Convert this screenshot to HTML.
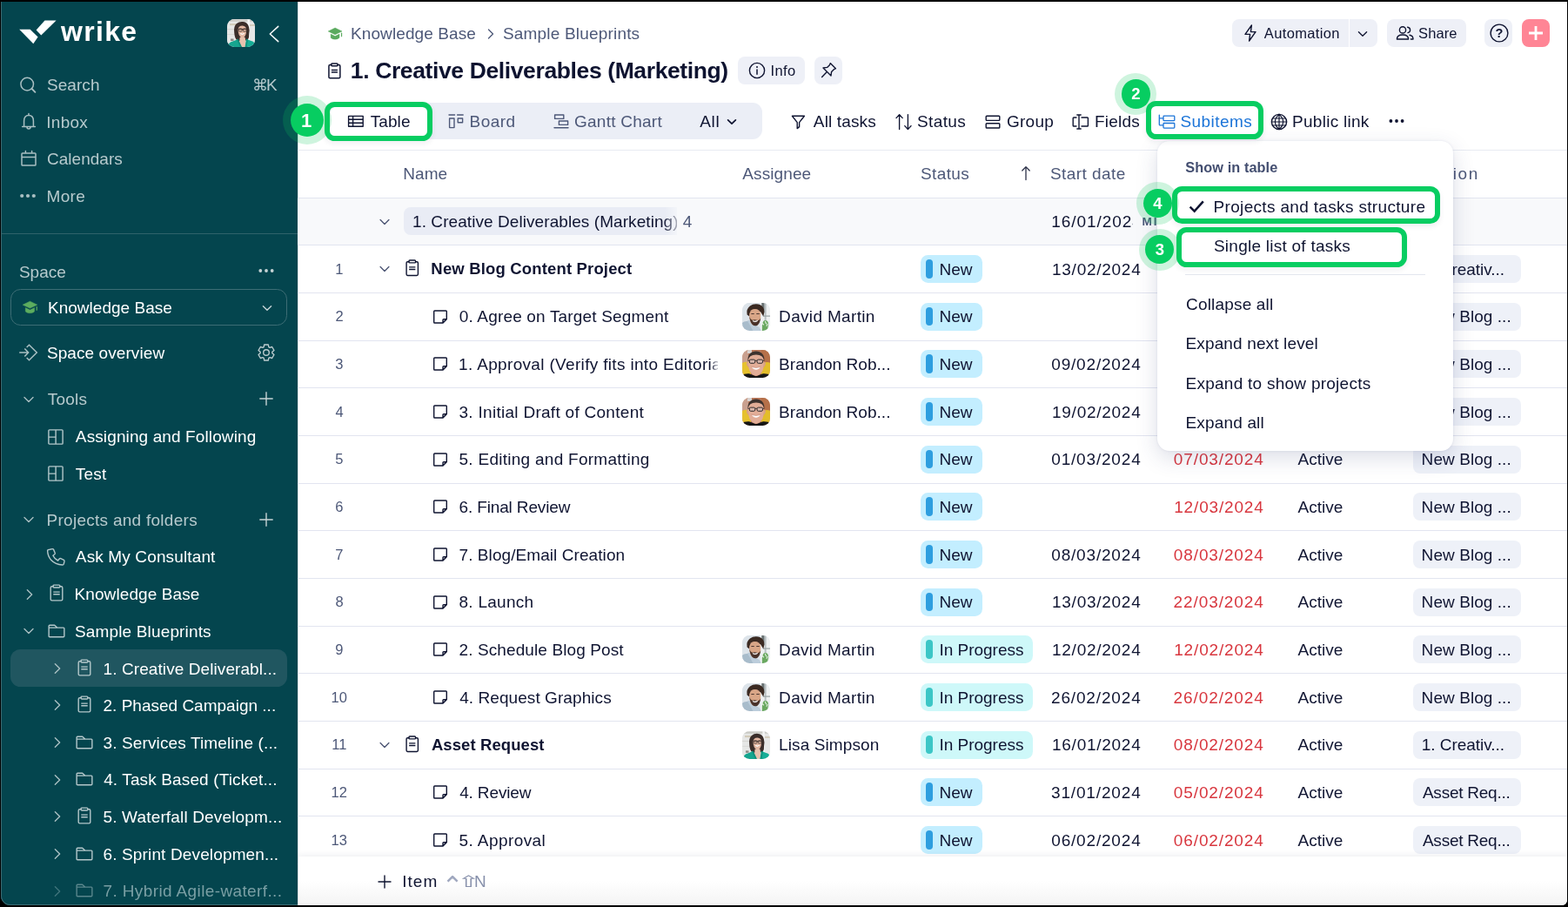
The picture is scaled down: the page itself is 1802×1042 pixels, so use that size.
<!DOCTYPE html>
<html lang="en"><head><meta charset="utf-8"><title>Wrike - 1. Creative Deliverables (Marketing)</title>
<style>
html,body{margin:0;padding:0;}
body{width:1802px;height:1042px;overflow:hidden;background:#000;font-family:"Liberation Sans", sans-serif;position:relative;}
#app{position:absolute;left:0;top:0;width:1802px;height:1042px;overflow:hidden;will-change:transform;}
#app>div,#app>svg{position:absolute;display:block;}
.t{white-space:pre;}
svg{overflow:visible;}
</style></head><body><div id="app">
<div style="left:0px;top:0px;width:1802px;height:1042px;background:#000;"></div>
<div style="left:342px;top:2px;width:1459px;height:1038px;background:#fff;border-radius:0 0 6px 0;"></div>
<div style="left:1px;top:2px;width:341px;height:1038px;background:#04454e;border-radius:0 0 0 11px;box-shadow:inset 1px 0 0 #3c6a72, inset 0 -1px 0 #3c6a72;"></div>
<div style="left:342px;top:2px;width:1px;height:1038px;background:#d9dfe0;"></div>
<svg style="left:20px;top:20px;" width="50" height="34" viewBox="0 0 50 34" fill="none"><path d="M2.2 13.8 H14.6 L23.6 22.6 L18.3 30.2 Z" fill="#fff"/><path d="M31.5 3.4 H44.6 L27.3 20.6 L21.6 14.6 Z" fill="#fff"/></svg>
<div class="t" style="left:70.00px;top:15.37px;font-size:32px;line-height:42px;color:#fff;font-weight:700;letter-spacing:1.322px;">wrike</div>
<div style="left:261px;top:22.2px;width:32px;height:32px;border-radius:8.5px;overflow:hidden;"><svg style="display:block;overflow:hidden" width="32" height="32" viewBox="0 0 32 32"><defs><filter id="avb1" x="-10%" y="-10%" width="120%" height="120%"><feGaussianBlur stdDeviation="0.55"/></filter></defs><rect width="32" height="32" fill="#e5e6e4"/><g filter="url(#avb1)"><rect x="-2" y="-2" width="36" height="36" fill="#e6e7e6"/><rect x="-2" y="0.5" width="36" height="2.2" fill="#c9c9c4"/><rect x="3" y="5" width="9" height="2.2" fill="#d2cbb9"/><rect x="23" y="6" width="10" height="2" fill="#d4cdbd"/><rect x="23.5" y="0" width="2.5" height="32" fill="#f4f5f5"/><rect x="0" y="11" width="8" height="1.2" fill="#d6d6d2"/><rect x="0" y="17" width="8" height="1" fill="#d9d9d6"/><rect x="4" y="22.5" width="3.5" height="2.5" fill="#8d8a86"/><path d="M8.2 15 Q7.4 8 11 5 Q14 2.4 18.5 3 Q23.5 3.6 25 9 Q26.2 13 25.2 17 Q25.6 21 23.6 24 L20 25 L12 25 Q8.4 22 8.2 15 Z" fill="#3b2d2a"/><path d="M12.6 12.6 Q12.8 7.6 17.6 7.6 Q22.2 7.8 22.2 13 Q22.2 18 20 20.6 Q18 22.4 16 21.2 Q12.8 18.6 12.6 12.6 Z" fill="#e2b7a2"/><path d="M14.6 21 L20.6 21 L21.4 26 L22 32 L13.4 32 L14.2 25.6 Z" fill="#e6c1ae"/><path d="M13 11 H22.4 V11.9 H13 Z" fill="#3a2f2c"/><rect x="13.2" y="11" width="3.9" height="3" rx="0.8" fill="none" stroke="#40342f" stroke-width="0.8"/><rect x="18.3" y="11" width="3.9" height="3" rx="0.8" fill="none" stroke="#40342f" stroke-width="0.8"/><path d="M15.2 16.6 Q17.4 18.6 20 16.4 Q17.6 17.4 15.2 16.6 Z" fill="#fff" stroke="#fff" stroke-width="0.7"/><path d="M0.5 33 Q1.5 26.6 6.5 25.6 L12.2 23.2 L16.4 31.5 L17 33 Z" fill="#14a58f"/><path d="M33 33 L31.5 27.6 Q30.5 25.6 27 24.8 L22 22.8 L20.6 31.5 L20 33 Z" fill="#16ad96"/><path d="M11 23.4 L12.6 22.6 L17 32 L15 32 Z" fill="#0f8f7c"/><path d="M22.6 22.6 L21 32 L22.6 32 L24 23.4 Z" fill="#0f8f7c"/></g></svg></div>
<svg style="left:302.5px;top:26.5px;" width="24" height="24" viewBox="0 0 24 24" fill="none"><path d="M16.7 3.4000000000000004 L7.3 12 L16.7 20.6" stroke="#f4f7f7" stroke-width="1.6" fill="none" stroke-linecap="round" stroke-linejoin="round" /></svg>
<svg style="left:20px;top:85px;" width="24" height="24" viewBox="0 0 24 24" fill="none"><circle cx="11.2" cy="11.6" r="7.3" stroke="#a9bfc2" stroke-width="1.5"/><path d="M16.6 17 L20.4 20.8" stroke="#a9bfc2" stroke-width="1.9" fill="none" stroke-linecap="round" stroke-linejoin="round" /></svg>
<div class="t" style="left:53.93px;top:84.82px;font-size:19px;line-height:25px;color:#b7cacd;letter-spacing:0.073px;">Search</div>
<div class="t" style="left:290px;top:86px;font-family:'DejaVu Sans','Liberation Sans',sans-serif;font-size:18px;line-height:24px;color:#b7cacd;">⌘</div>
<div class="t" style="left:306.10px;top:84.82px;font-size:19px;line-height:25px;color:#b7cacd;">K</div>
<svg style="left:21px;top:127px;" width="24" height="24" viewBox="0 0 24 24" fill="none"><path d="M4.6 18.6 H19.4 M6.6 18.4 V12 Q6.6 5.6 12 5.6 Q17.4 5.6 17.4 12 V18.4 M12 5.4 V3.6 M10 19 Q10 21 12 21 Q14 21 14 19" stroke="#a9bfc2" stroke-width="1.5" fill="none" stroke-linecap="round" stroke-linejoin="round" /></svg>
<div class="t" style="left:53.28px;top:127.52px;font-size:19px;line-height:25px;color:#b7cacd;letter-spacing:0.279px;">Inbox</div>
<svg style="left:21px;top:170px;" width="24" height="24" viewBox="0 0 24 24" fill="none"><path d="M4.8 6 H19.2 Q20 6 20 6.8 V19.2 Q20 20 19.2 20 H4.8 Q4 20 4 19.2 V6.8 Q4 6 4.8 6 Z M4 10.6 H20 M8.4 3.6 V6 M15.6 3.6 V6" stroke="#a9bfc2" stroke-width="1.5" fill="none" stroke-linecap="round" stroke-linejoin="round" /></svg>
<div class="t" style="left:54.00px;top:170.12px;font-size:19px;line-height:25px;color:#b7cacd;letter-spacing:0.021px;">Calendars</div>
<svg style="left:20.299999999999997px;top:218.6px;" width="24" height="12" viewBox="0 0 24 12" fill="none"><circle cx="5.2" cy="6" r="2.1" fill="#a9bfc2"/><circle cx="12.0" cy="6" r="2.1" fill="#a9bfc2"/><circle cx="18.8" cy="6" r="2.1" fill="#a9bfc2"/></svg>
<div class="t" style="left:53.50px;top:212.82px;font-size:19px;line-height:25px;color:#b7cacd;letter-spacing:0.349px;">More</div>
<div style="left:2px;top:268px;width:340px;height:1px;background:#2f636b;"></div>
<div class="t" style="left:21.93px;top:299.72px;font-size:19px;line-height:25px;color:#b7cacd;letter-spacing:0.017px;">Space</div>
<svg style="left:293.5px;top:305px;" width="24" height="12" viewBox="0 0 24 12" fill="none"><circle cx="5.3" cy="6" r="1.9" fill="#c6d3d5"/><circle cx="12.0" cy="6" r="1.9" fill="#c6d3d5"/><circle cx="18.7" cy="6" r="1.9" fill="#c6d3d5"/></svg>
<div style="left:12px;top:332px;width:318px;height:42px;border-radius:11.5px;border:1px solid #3d6d75;box-sizing:border-box;background:#04454e;"></div>
<svg style="left:25.9px;top:346px;" width="16.9" height="14" viewBox="0 0 16.2 13.3" fill="none"><path d="M0.2 3.9 L8.1 0.1 L16 3.9 L8.1 7.7 Z" fill="#5cad5f" stroke="#5cad5f" stroke-width="0.5" stroke-linejoin="round"/><path d="M3.1 7.1 L8.1 9.6 L13.1 7.1 V10.9 Q13.1 11.5 12.5 11.9 Q10.6 13.2 8.1 13.2 Q5.6 13.2 3.7 11.9 Q3.1 11.5 3.1 10.9 Z" fill="#5cad5f" stroke="#5cad5f" stroke-width="0.3" stroke-linejoin="round"/><rect x="15" y="5.6" width="1.15" height="4.7" rx="0.55" fill="#5cad5f"/></svg>
<div class="t" style="left:55.00px;top:340.92px;font-size:19px;line-height:25px;color:#fff;letter-spacing:0.021px;">Knowledge Base</div>
<svg style="left:297px;top:343.5px;" width="20" height="20" viewBox="0 0 20 20" fill="none"><path d="M5.4 7.7 L10 12.3 L14.6 7.7" stroke="#c5d5d7" stroke-width="1.4" fill="none" stroke-linecap="round" stroke-linejoin="round" /></svg>
<svg style="left:20px;top:393px;" width="26" height="24" viewBox="0 0 26 24" fill="none"><path d="M2.2 12 H12.4 M8.3 7.6 L12.6 12 L8.3 16.4 M10.7 6 L13.5 3.2 L22.3 12 L13.5 20.8 L10.7 18" stroke="#a9bfc2" stroke-width="1.5" fill="none" stroke-linecap="butt" stroke-linejoin="miter" /></svg>
<div class="t" style="left:53.93px;top:392.92px;font-size:19px;line-height:25px;color:#fff;letter-spacing:0.082px;">Space overview</div>
<svg style="left:294.3px;top:393px;" width="24" height="24" viewBox="0 0 24 24" fill="none"><path d="M14.30 21.01 L9.70 21.01 L9.19 18.30 L7.95 17.59 L5.35 18.50 L3.05 14.51 L5.14 12.71 L5.14 11.29 L3.05 9.49 L5.35 5.50 L7.95 6.41 L9.19 5.70 L9.70 2.99 L14.30 2.99 L14.81 5.70 L16.05 6.41 L18.65 5.50 L20.95 9.49 L18.86 11.29 L18.86 12.71 L20.95 14.51 L18.65 18.50 L16.05 17.59 L14.81 18.30 Z" stroke="#bccbce" stroke-width="1.4" fill="none" stroke-linecap="round" stroke-linejoin="round" /><circle cx="12" cy="12" r="3.3" stroke="#bccbce" stroke-width="1.4"/></svg>
<svg style="left:23px;top:448.6px;" width="20" height="20" viewBox="0 0 20 20" fill="none"><path d="M5 7.5 L10 12.5 L15 7.5" stroke="#a9bfc2" stroke-width="1.4" fill="none" stroke-linecap="round" stroke-linejoin="round" /></svg>
<div class="t" style="left:54.65px;top:446.02px;font-size:19px;line-height:25px;color:#b7cacd;letter-spacing:0.274px;">Tools</div>
<svg style="left:295.5px;top:448px;" width="20" height="20" viewBox="0 0 20 20" fill="none"><path d="M2.8 10 H17.2 M10 2.8 V17.2" stroke="#c6d3d5" stroke-width="1.4" fill="none" stroke-linecap="round" stroke-linejoin="round" /></svg>
<svg style="left:52.3px;top:489.7px;" width="24" height="24" viewBox="0 0 24 24" fill="none"><path d="M4.8 3.9 H19.2 Q20.1 3.9 20.1 4.8 V19.2 Q20.1 20.1 19.2 20.1 H4.8 Q3.9 20.1 3.9 19.2 V4.8 Q3.9 3.9 4.8 3.9 Z M12.1 3.9 V20.1 M3.9 12.1 H12.1" stroke="#b4c7ca" stroke-width="1.4" fill="none" stroke-linecap="round" stroke-linejoin="round" /></svg>
<div class="t" style="left:86.85px;top:488.72px;font-size:19px;line-height:25px;color:#fff;letter-spacing:0.115px;">Assigning and Following</div>
<svg style="left:52.3px;top:532.4px;" width="24" height="24" viewBox="0 0 24 24" fill="none"><path d="M4.8 3.9 H19.2 Q20.1 3.9 20.1 4.8 V19.2 Q20.1 20.1 19.2 20.1 H4.8 Q3.9 20.1 3.9 19.2 V4.8 Q3.9 3.9 4.8 3.9 Z M12.1 3.9 V20.1 M3.9 12.1 H12.1" stroke="#b4c7ca" stroke-width="1.4" fill="none" stroke-linecap="round" stroke-linejoin="round" /></svg>
<div class="t" style="left:86.65px;top:531.72px;font-size:19px;line-height:25px;color:#fff;letter-spacing:0.249px;">Test</div>
<svg style="left:23px;top:587.2px;" width="20" height="20" viewBox="0 0 20 20" fill="none"><path d="M5 7.5 L10 12.5 L15 7.5" stroke="#a9bfc2" stroke-width="1.4" fill="none" stroke-linecap="round" stroke-linejoin="round" /></svg>
<div class="t" style="left:53.50px;top:584.72px;font-size:19px;line-height:25px;color:#b7cacd;letter-spacing:0.275px;">Projects and folders</div>
<svg style="left:295.5px;top:587px;" width="20" height="20" viewBox="0 0 20 20" fill="none"><path d="M2.8 10 H17.2 M10 2.8 V17.2" stroke="#c6d3d5" stroke-width="1.4" fill="none" stroke-linecap="round" stroke-linejoin="round" /></svg>
<svg style="left:52.4px;top:627.5px;" width="24" height="24" viewBox="0 0 24 24" fill="none"><path d="M5.2 3.2 L8.2 2.6 Q9.2 2.5 9.6 3.4 L11.2 7.2 Q11.5 8.1 10.8 8.7 L8.9 10.2 Q10.6 14 14.6 16 L16.2 14 Q16.9 13.3 17.8 13.7 L21.4 15.4 Q22.2 15.9 22 16.8 L21.3 19.8 Q21 21 19.8 21 Q11.6 20.6 6.6 15.2 Q2.8 11 2.6 4.6 Q2.6 3.5 5.2 3.2 Z" stroke="#b4c7ca" stroke-width="1.4" fill="none" stroke-linecap="round" stroke-linejoin="round" /></svg>
<div class="t" style="left:86.85px;top:627.32px;font-size:19px;line-height:25px;color:#fff;letter-spacing:0.134px;">Ask My Consultant</div>
<svg style="left:24px;top:672.5px;" width="20" height="20" viewBox="0 0 20 20" fill="none"><path d="M7.35 4.7 L12.65 10 L7.35 15.3" stroke="#a9bfc2" stroke-width="1.4" fill="none" stroke-linecap="round" stroke-linejoin="round" /></svg>
<svg style="left:52.5px;top:669.2px;" width="24.0" height="24.0" viewBox="0 0 24 24" fill="none"><path d="M8.1 4.8 H6.6 Q5.2 4.8 5.2 6.2 V19.5 Q5.2 20.9 6.6 20.9 H17.4 Q18.8 20.9 18.8 19.5 V6.2 Q18.8 4.8 17.4 4.8 H15.9" stroke="#b4c7ca" stroke-width="1.4" fill="none" stroke-linecap="round" stroke-linejoin="round" /><path d="M8.1 4.1 Q8.1 3.1 9.1 3.1 H14.9 Q15.9 3.1 15.9 4.1 V5 Q15.9 6 14.9 6 H9.1 Q8.1 6 8.1 5 Z" stroke="#b4c7ca" stroke-width="1.4" fill="none" stroke-linecap="round" stroke-linejoin="round" /><path d="M8.3 11.1 H15.7 M8.3 13.8 H15.7" stroke="#b4c7ca" stroke-width="1.4" fill="none" stroke-linecap="butt" stroke-linejoin="round" /></svg>
<div class="t" style="left:85.50px;top:670.12px;font-size:19px;line-height:25px;color:#fff;letter-spacing:0.098px;">Knowledge Base</div>
<svg style="left:23px;top:715.1px;" width="20" height="20" viewBox="0 0 20 20" fill="none"><path d="M5 7.5 L10 12.5 L15 7.5" stroke="#a9bfc2" stroke-width="1.4" fill="none" stroke-linecap="round" stroke-linejoin="round" /></svg>
<svg style="left:53.150000000000006px;top:712.6px;" width="24" height="24" viewBox="0 0 24 24" fill="none"><path d="M3.15 6.2 Q3.15 5.3 4.05 5.3 H9.7 L12.7 8.1 H19.95 Q20.85 8.1 20.85 9 V17.8 Q20.85 18.7 19.95 18.7 H4.05 Q3.15 18.7 3.15 17.8 Z M3.15 8.1 H12.7" stroke="#b4c7ca" stroke-width="1.4" fill="none" stroke-linecap="round" stroke-linejoin="round" /></svg>
<div class="t" style="left:85.93px;top:712.72px;font-size:19px;line-height:25px;color:#fff;letter-spacing:0.157px;">Sample Blueprints</div>
<div style="left:12px;top:746px;width:318px;height:43px;background:#205660;border-radius:11.5px;"></div>
<svg style="left:56px;top:757.8px;" width="20" height="20" viewBox="0 0 20 20" fill="none"><path d="M7.35 4.7 L12.65 10 L7.35 15.3" stroke="#a9bfc2" stroke-width="1.4" fill="none" stroke-linecap="round" stroke-linejoin="round" /></svg>
<svg style="left:84.5px;top:754.5999999999999px;" width="24.0" height="24.0" viewBox="0 0 24 24" fill="none"><path d="M8.1 4.8 H6.6 Q5.2 4.8 5.2 6.2 V19.5 Q5.2 20.9 6.6 20.9 H17.4 Q18.8 20.9 18.8 19.5 V6.2 Q18.8 4.8 17.4 4.8 H15.9" stroke="#b4c7ca" stroke-width="1.4" fill="none" stroke-linecap="round" stroke-linejoin="round" /><path d="M8.1 4.1 Q8.1 3.1 9.1 3.1 H14.9 Q15.9 3.1 15.9 4.1 V5 Q15.9 6 14.9 6 H9.1 Q8.1 6 8.1 5 Z" stroke="#b4c7ca" stroke-width="1.4" fill="none" stroke-linecap="round" stroke-linejoin="round" /><path d="M8.3 11.1 H15.7 M8.3 13.8 H15.7" stroke="#b4c7ca" stroke-width="1.4" fill="none" stroke-linecap="butt" stroke-linejoin="round" /></svg>
<div class="t" style="left:118.62px;top:755.52px;font-size:19px;line-height:25px;color:#fff;letter-spacing:0.083px;">1. Creative Deliverabl...</div>
<svg style="left:56px;top:800.4499999999999px;" width="20" height="20" viewBox="0 0 20 20" fill="none"><path d="M7.35 4.7 L12.65 10 L7.35 15.3" stroke="#a9bfc2" stroke-width="1.4" fill="none" stroke-linecap="round" stroke-linejoin="round" /></svg>
<svg style="left:84.5px;top:797.2499999999999px;" width="24.0" height="24.0" viewBox="0 0 24 24" fill="none"><path d="M8.1 4.8 H6.6 Q5.2 4.8 5.2 6.2 V19.5 Q5.2 20.9 6.6 20.9 H17.4 Q18.8 20.9 18.8 19.5 V6.2 Q18.8 4.8 17.4 4.8 H15.9" stroke="#b4c7ca" stroke-width="1.4" fill="none" stroke-linecap="round" stroke-linejoin="round" /><path d="M8.1 4.1 Q8.1 3.1 9.1 3.1 H14.9 Q15.9 3.1 15.9 4.1 V5 Q15.9 6 14.9 6 H9.1 Q8.1 6 8.1 5 Z" stroke="#b4c7ca" stroke-width="1.4" fill="none" stroke-linecap="round" stroke-linejoin="round" /><path d="M8.3 11.1 H15.7 M8.3 13.8 H15.7" stroke="#b4c7ca" stroke-width="1.4" fill="none" stroke-linecap="butt" stroke-linejoin="round" /></svg>
<div class="t" style="left:118.50px;top:798.17px;font-size:19px;line-height:25px;color:#fff;letter-spacing:0.005px;">2. Phased Campaign ...</div>
<svg style="left:56px;top:843.0999999999999px;" width="20" height="20" viewBox="0 0 20 20" fill="none"><path d="M7.35 4.7 L12.65 10 L7.35 15.3" stroke="#a9bfc2" stroke-width="1.4" fill="none" stroke-linecap="round" stroke-linejoin="round" /></svg>
<svg style="left:85.1px;top:840.6999999999999px;" width="24" height="24" viewBox="0 0 24 24" fill="none"><path d="M3.15 6.2 Q3.15 5.3 4.05 5.3 H9.7 L12.7 8.1 H19.95 Q20.85 8.1 20.85 9 V17.8 Q20.85 18.7 19.95 18.7 H4.05 Q3.15 18.7 3.15 17.8 Z M3.15 8.1 H12.7" stroke="#b4c7ca" stroke-width="1.4" fill="none" stroke-linecap="round" stroke-linejoin="round" /></svg>
<div class="t" style="left:118.50px;top:840.82px;font-size:19px;line-height:25px;color:#fff;letter-spacing:0.130px;">3. Services Timeline (...</div>
<svg style="left:56px;top:885.75px;" width="20" height="20" viewBox="0 0 20 20" fill="none"><path d="M7.35 4.7 L12.65 10 L7.35 15.3" stroke="#a9bfc2" stroke-width="1.4" fill="none" stroke-linecap="round" stroke-linejoin="round" /></svg>
<svg style="left:85.1px;top:883.35px;" width="24" height="24" viewBox="0 0 24 24" fill="none"><path d="M3.15 6.2 Q3.15 5.3 4.05 5.3 H9.7 L12.7 8.1 H19.95 Q20.85 8.1 20.85 9 V17.8 Q20.85 18.7 19.95 18.7 H4.05 Q3.15 18.7 3.15 17.8 Z M3.15 8.1 H12.7" stroke="#b4c7ca" stroke-width="1.4" fill="none" stroke-linecap="round" stroke-linejoin="round" /></svg>
<div class="t" style="left:119.14px;top:883.47px;font-size:19px;line-height:25px;color:#fff;letter-spacing:0.129px;">4. Task Based (Ticket...</div>
<svg style="left:56px;top:928.4px;" width="20" height="20" viewBox="0 0 20 20" fill="none"><path d="M7.35 4.7 L12.65 10 L7.35 15.3" stroke="#a9bfc2" stroke-width="1.4" fill="none" stroke-linecap="round" stroke-linejoin="round" /></svg>
<svg style="left:84.5px;top:925.1999999999999px;" width="24.0" height="24.0" viewBox="0 0 24 24" fill="none"><path d="M8.1 4.8 H6.6 Q5.2 4.8 5.2 6.2 V19.5 Q5.2 20.9 6.6 20.9 H17.4 Q18.8 20.9 18.8 19.5 V6.2 Q18.8 4.8 17.4 4.8 H15.9" stroke="#b4c7ca" stroke-width="1.4" fill="none" stroke-linecap="round" stroke-linejoin="round" /><path d="M8.1 4.1 Q8.1 3.1 9.1 3.1 H14.9 Q15.9 3.1 15.9 4.1 V5 Q15.9 6 14.9 6 H9.1 Q8.1 6 8.1 5 Z" stroke="#b4c7ca" stroke-width="1.4" fill="none" stroke-linecap="round" stroke-linejoin="round" /><path d="M8.3 11.1 H15.7 M8.3 13.8 H15.7" stroke="#b4c7ca" stroke-width="1.4" fill="none" stroke-linecap="butt" stroke-linejoin="round" /></svg>
<div class="t" style="left:118.50px;top:926.12px;font-size:19px;line-height:25px;color:#fff;letter-spacing:0.159px;">5. Waterfall Developm...</div>
<svg style="left:56px;top:971.05px;" width="20" height="20" viewBox="0 0 20 20" fill="none"><path d="M7.35 4.7 L12.65 10 L7.35 15.3" stroke="#a9bfc2" stroke-width="1.4" fill="none" stroke-linecap="round" stroke-linejoin="round" /></svg>
<svg style="left:85.1px;top:968.65px;" width="24" height="24" viewBox="0 0 24 24" fill="none"><path d="M3.15 6.2 Q3.15 5.3 4.05 5.3 H9.7 L12.7 8.1 H19.95 Q20.85 8.1 20.85 9 V17.8 Q20.85 18.7 19.95 18.7 H4.05 Q3.15 18.7 3.15 17.8 Z M3.15 8.1 H12.7" stroke="#b4c7ca" stroke-width="1.4" fill="none" stroke-linecap="round" stroke-linejoin="round" /></svg>
<div class="t" style="left:118.50px;top:968.77px;font-size:19px;line-height:25px;color:#fff;letter-spacing:0.141px;">6. Sprint Developmen...</div>
<svg style="left:56px;top:1013.6999999999999px;" width="20" height="20" viewBox="0 0 20 20" fill="none"><path d="M7.35 4.7 L12.65 10 L7.35 15.3" stroke="#3f737b" stroke-width="1.4" fill="none" stroke-linecap="round" stroke-linejoin="round" /></svg>
<svg style="left:85.1px;top:1011.3px;" width="24" height="24" viewBox="0 0 24 24" fill="none"><path d="M3.15 6.2 Q3.15 5.3 4.05 5.3 H9.7 L12.7 8.1 H19.95 Q20.85 8.1 20.85 9 V17.8 Q20.85 18.7 19.95 18.7 H4.05 Q3.15 18.7 3.15 17.8 Z M3.15 8.1 H12.7" stroke="#5a868c" stroke-width="1.4" fill="none" stroke-linecap="round" stroke-linejoin="round" /></svg>
<div class="t" style="left:118.50px;top:1011.42px;font-size:19px;line-height:25px;color:#7a9fa4;letter-spacing:0.380px;">7. Hybrid Agile-waterf...</div>
<svg style="left:376.9px;top:31.6px;" width="16.2" height="13.3" viewBox="0 0 16.2 13.3" fill="none"><path d="M0.2 3.9 L8.1 0.1 L16 3.9 L8.1 7.7 Z" fill="#5aaa5e" stroke="#5aaa5e" stroke-width="0.5" stroke-linejoin="round"/><path d="M3.1 7.1 L8.1 9.6 L13.1 7.1 V10.9 Q13.1 11.5 12.5 11.9 Q10.6 13.2 8.1 13.2 Q5.6 13.2 3.7 11.9 Q3.1 11.5 3.1 10.9 Z" fill="#5aaa5e" stroke="#5aaa5e" stroke-width="0.3" stroke-linejoin="round"/><rect x="15" y="5.6" width="1.15" height="4.7" rx="0.55" fill="#5aaa5e"/></svg>
<div class="t" style="left:403.00px;top:26.02px;font-size:19px;line-height:25px;color:#4d5878;letter-spacing:0.098px;">Knowledge Base</div>
<svg style="left:553.5px;top:28.5px;" width="20" height="20" viewBox="0 0 20 20" fill="none"><path d="M7.5 5 L12.5 10 L7.5 15" stroke="#4d5878" stroke-width="1.3" fill="none" stroke-linecap="round" stroke-linejoin="round" /></svg>
<div class="t" style="left:577.93px;top:26.02px;font-size:19px;line-height:25px;color:#4d5878;letter-spacing:0.188px;">Sample Blueprints</div>
<svg style="left:373.0px;top:70.0px;" width="22.799999999999997" height="22.799999999999997" viewBox="0 0 24 24" fill="none"><path d="M8.1 4.8 H6.6 Q5.2 4.8 5.2 6.2 V19.5 Q5.2 20.9 6.6 20.9 H17.4 Q18.8 20.9 18.8 19.5 V6.2 Q18.8 4.8 17.4 4.8 H15.9" stroke="#0f1431" stroke-width="1.5789473684210527" fill="none" stroke-linecap="round" stroke-linejoin="round" /><path d="M8.1 4.1 Q8.1 3.1 9.1 3.1 H14.9 Q15.9 3.1 15.9 4.1 V5 Q15.9 6 14.9 6 H9.1 Q8.1 6 8.1 5 Z" stroke="#0f1431" stroke-width="1.5789473684210527" fill="none" stroke-linecap="round" stroke-linejoin="round" /><path d="M8.3 11.1 H15.7 M8.3 13.8 H15.7" stroke="#0f1431" stroke-width="1.5789473684210527" fill="none" stroke-linecap="butt" stroke-linejoin="round" /></svg>
<div class="t" style="left:402.87px;top:64.30px;font-size:26.5px;line-height:34px;color:#0e1330;font-weight:700;letter-spacing:-0.383px;">1. Creative Deliverables (Marketing)</div>
<div style="left:848.3px;top:65px;width:77px;height:32px;background:#eef0f7;border-radius:8px;"></div>
<svg style="left:858.2px;top:69px;" width="24" height="24" viewBox="0 0 24 24" fill="none"><circle cx="12" cy="12" r="8.6" stroke="#0f1431" stroke-width="1.4"/><path d="M12 11 V16.2" stroke="#0f1431" stroke-width="1.5" fill="none" stroke-linecap="round" stroke-linejoin="round" /><circle cx="12" cy="7.9" r="1" fill="#0f1431"/></svg>
<div class="t" style="left:885.45px;top:70.69px;font-size:16.5px;line-height:21px;color:#0f1431;letter-spacing:0.391px;">Info</div>
<div style="left:936px;top:65px;width:32px;height:32px;background:#eef0f7;border-radius:8px;"></div>
<svg style="left:940px;top:69px;" width="24" height="24" viewBox="0 0 24 24" fill="none"><path d="M14.2 3.6 L20.4 9.8 L18.6 10.4 L15.6 13.4 L15 18 L6 9 L10.6 8.4 L13.6 5.4 Z M10.4 13.6 L4.6 19.4" stroke="#0f1431" stroke-width="1.4" fill="none" stroke-linecap="round" stroke-linejoin="round" /></svg>
<div style="left:1416px;top:22px;width:134px;height:32px;background:#eef0f7;border-radius:8px 0 0 8px;"></div>
<div style="left:1551px;top:22px;width:32px;height:32px;background:#eef0f7;border-radius:0 8px 8px 0;"></div>
<svg style="left:1425px;top:26px;" width="24" height="24" viewBox="0 0 24 24" fill="none"><path d="M13.4 3 L6 13.4 H11.6 L10.6 21 L18 10.6 H12.4 Z" stroke="#0f1431" stroke-width="1.4" fill="none" stroke-linecap="round" stroke-linejoin="round" /></svg>
<div class="t" style="left:1452.87px;top:27.99px;font-size:16.5px;line-height:21px;color:#0f1431;letter-spacing:0.358px;">Automation</div>
<svg style="left:1556px;top:28.799999999999997px;" width="20" height="20" viewBox="0 0 20 20" fill="none"><path d="M5.4 7.7 L10 12.3 L14.6 7.7" stroke="#0f1431" stroke-width="1.3" fill="none" stroke-linecap="round" stroke-linejoin="round" /></svg>
<div style="left:1594px;top:22px;width:91px;height:32px;background:#eef0f7;border-radius:8px;"></div>
<svg style="left:1602px;top:26px;" width="26" height="24" viewBox="0 0 26 24" fill="none"><circle cx="10" cy="8.4" r="3.6" stroke="#0f1431" stroke-width="1.4"/><path d="M3.4 19 Q3.4 14 10 14 Q16.6 14 16.6 19 Z" stroke="#0f1431" stroke-width="1.4" fill="none" stroke-linecap="round" stroke-linejoin="round" /><path d="M15.6 5.2 Q18.6 5.6 18.6 8.4 Q18.6 11 16 11.6 M18 14.2 Q22 15 22 19 H19.4" stroke="#0f1431" stroke-width="1.4" fill="none" stroke-linecap="round" stroke-linejoin="round" /></svg>
<div class="t" style="left:1630.00px;top:27.99px;font-size:16.5px;line-height:21px;color:#0f1431;letter-spacing:0.125px;">Share</div>
<div style="left:1706.3px;top:22px;width:32px;height:32px;background:#eef0f7;border-radius:8px;"></div>
<svg style="left:1710.5px;top:26.3px;" width="24" height="24" viewBox="0 0 24 24" fill="none"><circle cx="12" cy="12" r="9.9" stroke="#0f1431" stroke-width="1.4"/></svg>
<div class="t" style="left:1718.40px;top:29.07px;font-size:14.5px;line-height:19px;color:#0f1431;font-weight:700;">?</div>
<div style="left:1749px;top:22px;width:32px;height:32px;background:#ff8595;border-radius:8px;"></div>
<svg style="left:1753px;top:26px;" width="24" height="24" viewBox="0 0 24 24" fill="none"><path d="M4 12 H20 M12 4 V20" stroke="#fff" stroke-width="2.8" fill="none" stroke-linecap="butt" stroke-linejoin="round" /></svg>
<div style="left:375px;top:118.3px;width:501px;height:42.1px;background:#ebeef6;border-radius:11px;"></div>
<div style="left:378.5px;top:122.5px;width:113.5px;height:34px;background:#fff;border-radius:8px;"></div>
<svg style="left:397px;top:127.4px;" width="24" height="24" viewBox="0 0 24 24" fill="none"><path d="M3.6 6.4 H20.2 V18.2 H3.6 Z M3.6 10.3 H20.2 M3.6 14.3 H20.2 M8.6 6.4 V18.2" stroke="#0f1431" stroke-width="1.4" fill="none" stroke-linecap="round" stroke-linejoin="round" /></svg>
<div class="t" style="left:425.65px;top:127.22px;font-size:19px;line-height:25px;color:#0f1431;letter-spacing:0.099px;">Table</div>
<svg style="left:512px;top:127px;" width="24" height="24" viewBox="0 0 24 24" fill="none"><path d="M4 5 H10.6 M13.6 5 H20.2 M4.6 9 H10 V19.6 H4.6 Z M14.2 9 H19.6 V13.8 H14.2 Z" stroke="#4d5878" stroke-width="1.4" fill="none" stroke-linecap="round" stroke-linejoin="round" /></svg>
<div class="t" style="left:539.50px;top:127.22px;font-size:19px;line-height:25px;color:#4d5878;letter-spacing:0.469px;">Board</div>
<svg style="left:633px;top:127px;" width="24" height="24" viewBox="0 0 24 24" fill="none"><path d="M4.6 5 H14.8 V9.4 H4.6 Z M9.4 12 H19.6 V16.4 H9.4 Z M4 19.8 H20" stroke="#4d5878" stroke-width="1.4" fill="none" stroke-linecap="round" stroke-linejoin="round" /></svg>
<div class="t" style="left:660.00px;top:127.22px;font-size:19px;line-height:25px;color:#4d5878;letter-spacing:0.250px;">Gantt Chart</div>
<div class="t" style="left:804.35px;top:127.22px;font-size:19px;line-height:25px;color:#0f1431;letter-spacing:0.574px;">All</div>
<svg style="left:831px;top:129.8px;" width="20" height="20" viewBox="0 0 20 20" fill="none"><path d="M5.6 7.8 L10 12.2 L14.4 7.8" stroke="#0f1431" stroke-width="1.7" fill="none" stroke-linecap="round" stroke-linejoin="round" /></svg>
<div style="left:342px;top:172px;width:1459px;height:1px;background:#e8ebf2;"></div>
<svg style="left:905px;top:128px;" width="24" height="24" viewBox="0 0 24 24" fill="none"><path d="M5.4 5.2 H19.4 L13.6 12.6 V17.6 L11.2 19.6 V12.6 Z" stroke="#0f1431" stroke-width="1.4" fill="none" stroke-linecap="round" stroke-linejoin="round" /></svg>
<div class="t" style="left:934.85px;top:127.22px;font-size:19px;line-height:25px;color:#0f1431;letter-spacing:0.143px;">All tasks</div>
<svg style="left:1026px;top:128px;" width="26" height="24" viewBox="0 0 26 24" fill="none"><path d="M7.6 20.6 V3.8 M4 7.6 L7.6 3.6 L11.2 7.6 M17.4 3.6 V20.4 M13.8 16.6 L17.4 20.6 L21 16.6" stroke="#0f1431" stroke-width="1.35" fill="none" stroke-linecap="round" stroke-linejoin="round" /></svg>
<div class="t" style="left:1053.93px;top:127.22px;font-size:19px;line-height:25px;color:#0f1431;letter-spacing:0.413px;">Status</div>
<svg style="left:1129px;top:128px;" width="24" height="24" viewBox="0 0 24 24" fill="none"><path d="M5 5.2 H19 Q19.8 5.2 19.8 6 V9.6 Q19.8 10.4 19 10.4 H5 Q4.2 10.4 4.2 9.6 V6 Q4.2 5.2 5 5.2 Z M5 13.8 H19 Q19.8 13.8 19.8 14.6 V18.2 Q19.8 19 19 19 H5 Q4.2 19 4.2 18.2 V14.6 Q4.2 13.8 5 13.8 Z" stroke="#0f1431" stroke-width="1.4" fill="none" stroke-linecap="round" stroke-linejoin="round" /></svg>
<div class="t" style="left:1157.00px;top:127.22px;font-size:19px;line-height:25px;color:#0f1431;letter-spacing:0.250px;">Group</div>
<svg style="left:1229px;top:128px;" width="24" height="24" viewBox="0 0 24 24" fill="none"><path d="M8 7 H5 Q4.2 7 4.2 7.8 V16.2 Q4.2 17 5 17 H8 M14 7 H20.6 Q21.4 7 21.4 7.8 V16.2 Q21.4 17 20.6 17 H14 M11 4 V20 M8.8 4 H13.2 M8.8 20 H13.2" stroke="#0f1431" stroke-width="1.4" fill="none" stroke-linecap="round" stroke-linejoin="round" /></svg>
<div class="t" style="left:1258.00px;top:127.22px;font-size:19px;line-height:25px;color:#0f1431;letter-spacing:0.201px;">Fields</div>
<svg style="left:1328px;top:128px;" width="24" height="24" viewBox="0 0 24 24" fill="none"><path d="M4.3 4.2 V15 Q4.3 15.9 5.2 15.9 H9 M4.3 7.9 H9 M9.8 5.1 H21 Q21.8 5.1 21.8 5.9 V9.9 Q21.8 10.7 21 10.7 H9.8 Q9 10.7 9 9.9 V5.9 Q9 5.1 9.8 5.1 Z M9.8 13.5 H21 Q21.8 13.5 21.8 14.3 V18.3 Q21.8 19.1 21 19.1 H9.8 Q9 19.1 9 18.3 V14.3 Q9 13.5 9.8 13.5 Z" stroke="#1b74d8" stroke-width="1.3" fill="none" stroke-linecap="round" stroke-linejoin="round" /></svg>
<div class="t" style="left:1356.43px;top:127.22px;font-size:19px;line-height:25px;color:#1b74d8;letter-spacing:0.430px;">Subitems</div>
<svg style="left:1458px;top:128px;" width="24" height="24" viewBox="0 0 24 24" fill="none"><circle cx="12" cy="12" r="8.6" stroke="#0f1431" stroke-width="1.4"/><path d="M3.4 12 H20.6 M4.6 8 H19.4 M4.6 16 H19.4 M12 3.4 V20.6 M12 3.4 Q7.4 7.4 7.4 12 Q7.4 16.6 12 20.6 M12 3.4 Q16.6 7.4 16.6 12 Q16.6 16.6 12 20.6" stroke="#0f1431" stroke-width="1.2" fill="none" stroke-linecap="round" stroke-linejoin="round" /></svg>
<div class="t" style="left:1485.00px;top:127.22px;font-size:19px;line-height:25px;color:#0f1431;letter-spacing:0.281px;">Public link</div>
<svg style="left:1592.5px;top:133px;" width="24" height="12" viewBox="0 0 24 12" fill="none"><circle cx="5.4" cy="6" r="1.9" fill="#0f1431"/><circle cx="12.0" cy="6" r="1.9" fill="#0f1431"/><circle cx="18.6" cy="6" r="1.9" fill="#0f1431"/></svg>
<div class="t" style="left:463.20px;top:187.32px;font-size:19px;line-height:25px;color:#4d5878;letter-spacing:0.090px;">Name</div>
<div class="t" style="left:853.35px;top:187.32px;font-size:19px;line-height:25px;color:#4d5878;letter-spacing:0.093px;">Assignee</div>
<div class="t" style="left:1057.93px;top:187.32px;font-size:19px;line-height:25px;color:#4d5878;letter-spacing:0.413px;">Status</div>
<svg style="left:1166.6px;top:187.4px;" width="24" height="24" viewBox="0 0 24 24" fill="none"><path d="M12 19.6 V4.8 M7.8 9 L12 4.6 L16.2 9" stroke="#2b3048" stroke-width="1.3" fill="none" stroke-linecap="round" stroke-linejoin="round" /></svg>
<div class="t" style="left:1206.93px;top:187.32px;font-size:19px;line-height:25px;color:#4d5878;letter-spacing:0.457px;">Start date</div>
<div class="t" style="left:1662.81px;top:187.32px;font-size:19px;line-height:25px;color:#4d5878;letter-spacing:1.606px;">tion</div>
<div style="left:342px;top:226.5px;width:1459px;height:1px;background:#e2e5f0;"></div>
<div style="left:342px;top:227.5px;width:1459px;height:54.2px;background:#f8f9fb;"></div>
<div style="left:342px;top:281.17px;width:1459px;height:1px;background:#e2e5f0;"></div>
<svg style="left:432px;top:244.6px;" width="20" height="20" viewBox="0 0 20 20" fill="none"><path d="M5.1 7.55 L10 12.45 L14.9 7.55" stroke="#4a5372" stroke-width="1.3" fill="none" stroke-linecap="round" stroke-linejoin="round" /></svg>
<div style="left:464px;top:238.2px;width:314px;height:32.3px;border-radius:8px 0 0 8px;background:linear-gradient(90deg,#e9ecf5 0,#e9ecf5 300px,#f3f5f9 314px);"></div>
<div class="t" style="left:474.02px;top:242.22px;font-size:19px;line-height:25px;color:#0f1431;letter-spacing:0.071px;width:303.5px;-webkit-mask-image:linear-gradient(90deg,#000 288px,rgba(0,0,0,0.35) 303px);">1. Creative Deliverables (Marketing)</div>
<div class="t" style="left:784.64px;top:242.22px;font-size:19px;line-height:25px;color:#4d5878;">4</div>
<div class="t" style="left:1208.22px;top:242.22px;font-size:19px;line-height:25px;color:#0f1431;letter-spacing:0.944px;width:94.2px;overflow:hidden;">16/01/2024</div>
<div class="t" style="left:1312.60px;top:245.96px;font-size:13.6px;line-height:18px;color:#4a5878;font-weight:700;letter-spacing:1.800px;">MI</div>
<div style="left:342px;top:335.83px;width:1459px;height:1px;background:#e2e5f0;"></div>
<div class="t" style="left:385.21px;top:298.69px;font-size:16.5px;line-height:21px;color:#4d5878;">1</div>
<svg style="left:432px;top:299.0005px;" width="20" height="20" viewBox="0 0 20 20" fill="none"><path d="M5.1 7.55 L10 12.45 L14.9 7.55" stroke="#4a5372" stroke-width="1.3" fill="none" stroke-linecap="round" stroke-linejoin="round" /></svg>
<svg style="left:461.84000000000003px;top:295.8405px;" width="23.52" height="23.52" viewBox="0 0 24 24" fill="none"><path d="M8.1 4.8 H6.6 Q5.2 4.8 5.2 6.2 V19.5 Q5.2 20.9 6.6 20.9 H17.4 Q18.8 20.9 18.8 19.5 V6.2 Q18.8 4.8 17.4 4.8 H15.9" stroke="#0f1431" stroke-width="1.4285714285714286" fill="none" stroke-linecap="round" stroke-linejoin="round" /><path d="M8.1 4.1 Q8.1 3.1 9.1 3.1 H14.9 Q15.9 3.1 15.9 4.1 V5 Q15.9 6 14.9 6 H9.1 Q8.1 6 8.1 5 Z" stroke="#0f1431" stroke-width="1.4285714285714286" fill="none" stroke-linecap="round" stroke-linejoin="round" /><path d="M8.3 11.1 H15.7 M8.3 13.8 H15.7" stroke="#0f1431" stroke-width="1.4285714285714286" fill="none" stroke-linecap="butt" stroke-linejoin="round" /></svg>
<div class="t" style="left:495.36px;top:297.21px;font-size:18.5px;line-height:24px;color:#0f1431;font-weight:700;letter-spacing:0.161px;">New Blog Content Project</div>
<div style="left:1058.1px;top:293.0px;width:71.1px;height:32px;background:#c3eeff;border-radius:8.5px;"></div>
<div style="left:1063.7px;top:298.1px;width:8.2px;height:21.7px;background:#2e9edf;border-radius:4.1px;"></div>
<div class="t" style="left:1079.60px;top:296.72px;font-size:19px;line-height:25px;color:#0f1431;letter-spacing:-0.048px;">New</div>
<div class="t" style="left:1209.02px;top:296.72px;font-size:19px;line-height:25px;color:#0f1431;letter-spacing:0.733px;">13/02/2024</div>
<div style="left:1624px;top:293.0px;width:123.5px;height:32px;background:#eef1f8;border-radius:8px;"></div>
<div class="t" style="left:1633.72px;top:296.72px;font-size:19px;line-height:25px;color:#0f1431;letter-spacing:-0.043px;">1. Creativ...</div>
<div style="left:342px;top:390.5px;width:1459px;height:1px;background:#e2e5f0;"></div>
<div class="t" style="left:385.40px;top:353.36px;font-size:16.5px;line-height:21px;color:#4d5878;">2</div>
<svg style="left:494.3px;top:351.66749999999996px;" width="24" height="24" viewBox="0 0 24 24" fill="none"><path d="M5.5 5 H18.5 Q19.3 5 19.3 5.8 V14.6 L15 19 H5.5 Q4.7 19 4.7 18.2 V5.8 Q4.7 5 5.5 5 Z M19.3 14.7 H15.8 Q15 14.7 15 15.5 V19" stroke="#0f1431" stroke-width="1.4" fill="none" stroke-linecap="round" stroke-linejoin="miter" /></svg>
<div class="t" style="left:527.76px;top:351.39px;font-size:19px;line-height:25px;color:#0f1431;letter-spacing:0.170px;">0. Agree on Target Segment</div>
<div style="left:853.1px;top:347.8px;width:31.8px;height:31.8px;border-radius:8.5px;overflow:hidden;"><svg style="display:block;overflow:hidden" width="31.8" height="31.8" viewBox="0 0 32 32"><defs><filter id="avb2" x="-10%" y="-10%" width="120%" height="120%"><feGaussianBlur stdDeviation="0.55"/></filter></defs><rect width="32" height="32" fill="#dfe5ea"/><g filter="url(#avb2)"><rect x="-2" y="-2" width="36" height="36" fill="#dde4ea"/><rect x="21" y="-2" width="14" height="36" fill="#eef1f2"/><rect x="22.4" y="-2" width="3.4" height="13" fill="#6a7273"/><rect x="25.8" y="-2" width="2" height="26" fill="#b8c0c2"/><rect x="24" y="14.6" width="10" height="1.2" fill="#9aa4a6"/><path d="M23 33 L23 26 Q23.6 21.6 25.4 20.4 Q27.6 19.6 29.6 21.6 Q31 24 30 27 L28.6 33 Z" fill="#6aa861"/><path d="M22.6 23 l2.4 2.4 M26.4 21 l1.4 3.4 M29.6 24 l-1.6 3" stroke="#e6f2e2" stroke-width="1.1"/><path d="M-1 33 L-1 23.6 Q2 20.6 7 20.8 L12 24 L20 29 L22 33 Z" fill="#a8bccb"/><path d="M6 20.6 L9.4 19.6 L15 27 L19.6 28 L21.6 33 L13 33 Z" fill="#bccddb"/><path d="M5.6 13.6 Q4.4 7 9 3.6 Q13 0.6 18.6 1.6 Q23.6 2.6 25.2 7.6 Q26.2 11.6 24.4 15.6 L21 10 L10 9.6 L8.2 15.6 Z" fill="#3a2a24"/><path d="M8.4 12.4 Q9.6 7 14.6 7 Q20.4 7 21.4 12.6 Q22 18 19.6 22.6 Q17.4 26.4 14 26 Q10 25 8.6 19 Q8 15.6 8.4 12.4 Z" fill="#d9a687"/><path d="M8.2 15.4 Q9 22 11.6 25 Q14.4 27.6 17.6 25.8 Q20.4 23.6 21.4 17.6 Q19.6 20.6 17.8 20.2 Q14.6 18.6 11.8 19.8 Q9.6 19.6 8.2 15.4 Z" fill="#4a3329"/><path d="M12 20.8 Q14.8 23 18 20.6 Q15 21.4 12 20.8 Z" fill="#fff" stroke="#fff" stroke-width="0.6"/><path d="M10.4 12.6 h3.4 M16.4 12.6 h3.4" stroke="#3a2a24" stroke-width="0.9"/></g></svg></div>
<div class="t" style="left:895.10px;top:351.39px;font-size:19px;line-height:25px;color:#0f1431;letter-spacing:0.330px;">David Martin</div>
<div style="left:1058.1px;top:347.7px;width:71.1px;height:32px;background:#c3eeff;border-radius:8.5px;"></div>
<div style="left:1063.7px;top:352.8px;width:8.2px;height:21.7px;background:#2e9edf;border-radius:4.1px;"></div>
<div class="t" style="left:1079.60px;top:351.39px;font-size:19px;line-height:25px;color:#0f1431;letter-spacing:-0.048px;">New</div>
<div style="left:1624px;top:347.7px;width:123.5px;height:32px;background:#eef1f8;border-radius:8px;"></div>
<div class="t" style="left:1633.60px;top:351.39px;font-size:19px;line-height:25px;color:#0f1431;letter-spacing:0.065px;">New Blog ...</div>
<div style="left:342px;top:445.17px;width:1459px;height:1px;background:#e2e5f0;"></div>
<div class="t" style="left:385.37px;top:408.02px;font-size:16.5px;line-height:21px;color:#4d5878;">3</div>
<svg style="left:494.3px;top:406.3345px;" width="24" height="24" viewBox="0 0 24 24" fill="none"><path d="M5.5 5 H18.5 Q19.3 5 19.3 5.8 V14.6 L15 19 H5.5 Q4.7 19 4.7 18.2 V5.8 Q4.7 5 5.5 5 Z M19.3 14.7 H15.8 Q15 14.7 15 15.5 V19" stroke="#0f1431" stroke-width="1.4" fill="none" stroke-linecap="round" stroke-linejoin="miter" /></svg>
<div class="t" style="left:527.12px;top:406.05px;font-size:19px;line-height:25px;color:#0f1431;letter-spacing:0.330px;width:298px;overflow:hidden;-webkit-mask-image:linear-gradient(90deg,#000 289px,rgba(0,0,0,0.25) 298px);">1. Approval (Verify fits into Editorial</div>
<div style="left:853.1px;top:402.4px;width:31.8px;height:31.8px;border-radius:8.5px;overflow:hidden;"><svg style="display:block;overflow:hidden" width="31.8" height="31.8" viewBox="0 0 32 32"><defs><filter id="avb3" x="-10%" y="-10%" width="120%" height="120%"><feGaussianBlur stdDeviation="0.55"/></filter></defs><rect width="32" height="32" fill="#c98d6a"/><g filter="url(#avb3)"><rect x="-2" y="-2" width="36" height="36" fill="#b9785a"/><rect x="-2" y="-2" width="9" height="17" fill="#c9a08f"/><rect x="6" y="-2" width="5" height="6" fill="#d9d4d2"/><rect x="22" y="-2" width="12" height="16" fill="#b56f49"/><path d="M-2 17 Q1 13.4 6 14 L10 15 V30 H-2 Z" fill="#e6c12f"/><path d="M34 16 Q30 13 25.6 14.6 L22 16 V30 H34 Z" fill="#e3bd2b"/><path d="M-2 34 V29.6 Q3 27 8 27.4 L16 30.4 L24 27.4 Q29 27 34 29.6 V34 Z" fill="#151416"/><path d="M6.4 13 Q6 4.4 12 2.2 Q16 0.8 20 2.2 Q26 4.4 25.6 13 L24 9 Q16 5.6 8 9 Z" fill="#3d332f"/><path d="M7 12.6 Q7.4 5.6 16 5.6 Q24.6 5.6 25 12.6 Q25.6 19 23.6 24 Q20.6 30 16 30 Q11.4 30 8.4 24 Q6.4 19 7 12.6 Z" fill="#e2ad97"/><path d="M5.8 14 Q5 17 7 19 Z M26.2 14 Q27 17 25 19 Z" fill="#d89f8a" stroke="#d89f8a" stroke-width="1.2"/><rect x="8.4" y="11.2" width="6.4" height="4.2" rx="1.3" fill="#d6b5aa" stroke="#2e2a2b" stroke-width="1"/><rect x="17.2" y="11.2" width="6.4" height="4.2" rx="1.3" fill="#d6b5aa" stroke="#2e2a2b" stroke-width="1"/><path d="M14.8 12.4 h2.4 M6.6 12.4 h1.8 M23.6 12.4 h1.8" stroke="#2e2a2b" stroke-width="0.9"/><path d="M11.6 20.4 Q16 24.6 20.4 20.4 Q16 22 11.6 20.4 Z" fill="#fff" stroke="#fff" stroke-width="0.9"/><path d="M10.6 19.6 Q16 21.4 21.4 19.6" stroke="#c48574" stroke-width="0.6" fill="none"/></g></svg></div>
<div class="t" style="left:895.10px;top:406.05px;font-size:19px;line-height:25px;color:#0f1431;letter-spacing:0.039px;">Brandon Rob...</div>
<div style="left:1058.1px;top:402.3px;width:71.1px;height:32px;background:#c3eeff;border-radius:8.5px;"></div>
<div style="left:1063.7px;top:407.4px;width:8.2px;height:21.7px;background:#2e9edf;border-radius:4.1px;"></div>
<div class="t" style="left:1079.60px;top:406.05px;font-size:19px;line-height:25px;color:#0f1431;letter-spacing:-0.048px;">New</div>
<div class="t" style="left:1208.26px;top:406.05px;font-size:19px;line-height:25px;color:#0f1431;letter-spacing:0.817px;">09/02/2024</div>
<div style="left:1624px;top:402.3px;width:123.5px;height:32px;background:#eef1f8;border-radius:8px;"></div>
<div class="t" style="left:1633.60px;top:406.05px;font-size:19px;line-height:25px;color:#0f1431;letter-spacing:0.065px;">New Blog ...</div>
<div style="left:342px;top:499.84px;width:1459px;height:1px;background:#e2e5f0;"></div>
<div class="t" style="left:385.47px;top:462.69px;font-size:16.5px;line-height:21px;color:#4d5878;">4</div>
<svg style="left:494.3px;top:461.0015px;" width="24" height="24" viewBox="0 0 24 24" fill="none"><path d="M5.5 5 H18.5 Q19.3 5 19.3 5.8 V14.6 L15 19 H5.5 Q4.7 19 4.7 18.2 V5.8 Q4.7 5 5.5 5 Z M19.3 14.7 H15.8 Q15 14.7 15 15.5 V19" stroke="#0f1431" stroke-width="1.4" fill="none" stroke-linecap="round" stroke-linejoin="miter" /></svg>
<div class="t" style="left:527.50px;top:460.72px;font-size:19px;line-height:25px;color:#0f1431;letter-spacing:0.284px;">3. Initial Draft of Content</div>
<div style="left:853.1px;top:457.1px;width:31.8px;height:31.8px;border-radius:8.5px;overflow:hidden;"><svg style="display:block;overflow:hidden" width="31.8" height="31.8" viewBox="0 0 32 32"><defs><filter id="avb4" x="-10%" y="-10%" width="120%" height="120%"><feGaussianBlur stdDeviation="0.55"/></filter></defs><rect width="32" height="32" fill="#c98d6a"/><g filter="url(#avb4)"><rect x="-2" y="-2" width="36" height="36" fill="#b9785a"/><rect x="-2" y="-2" width="9" height="17" fill="#c9a08f"/><rect x="6" y="-2" width="5" height="6" fill="#d9d4d2"/><rect x="22" y="-2" width="12" height="16" fill="#b56f49"/><path d="M-2 17 Q1 13.4 6 14 L10 15 V30 H-2 Z" fill="#e6c12f"/><path d="M34 16 Q30 13 25.6 14.6 L22 16 V30 H34 Z" fill="#e3bd2b"/><path d="M-2 34 V29.6 Q3 27 8 27.4 L16 30.4 L24 27.4 Q29 27 34 29.6 V34 Z" fill="#151416"/><path d="M6.4 13 Q6 4.4 12 2.2 Q16 0.8 20 2.2 Q26 4.4 25.6 13 L24 9 Q16 5.6 8 9 Z" fill="#3d332f"/><path d="M7 12.6 Q7.4 5.6 16 5.6 Q24.6 5.6 25 12.6 Q25.6 19 23.6 24 Q20.6 30 16 30 Q11.4 30 8.4 24 Q6.4 19 7 12.6 Z" fill="#e2ad97"/><path d="M5.8 14 Q5 17 7 19 Z M26.2 14 Q27 17 25 19 Z" fill="#d89f8a" stroke="#d89f8a" stroke-width="1.2"/><rect x="8.4" y="11.2" width="6.4" height="4.2" rx="1.3" fill="#d6b5aa" stroke="#2e2a2b" stroke-width="1"/><rect x="17.2" y="11.2" width="6.4" height="4.2" rx="1.3" fill="#d6b5aa" stroke="#2e2a2b" stroke-width="1"/><path d="M14.8 12.4 h2.4 M6.6 12.4 h1.8 M23.6 12.4 h1.8" stroke="#2e2a2b" stroke-width="0.9"/><path d="M11.6 20.4 Q16 24.6 20.4 20.4 Q16 22 11.6 20.4 Z" fill="#fff" stroke="#fff" stroke-width="0.9"/><path d="M10.6 19.6 Q16 21.4 21.4 19.6" stroke="#c48574" stroke-width="0.6" fill="none"/></g></svg></div>
<div class="t" style="left:895.10px;top:460.72px;font-size:19px;line-height:25px;color:#0f1431;letter-spacing:0.039px;">Brandon Rob...</div>
<div style="left:1058.1px;top:457.0px;width:71.1px;height:32px;background:#c3eeff;border-radius:8.5px;"></div>
<div style="left:1063.7px;top:462.1px;width:8.2px;height:21.7px;background:#2e9edf;border-radius:4.1px;"></div>
<div class="t" style="left:1079.60px;top:460.72px;font-size:19px;line-height:25px;color:#0f1431;letter-spacing:-0.048px;">New</div>
<div class="t" style="left:1209.02px;top:460.72px;font-size:19px;line-height:25px;color:#0f1431;letter-spacing:0.733px;">19/02/2024</div>
<div style="left:1624px;top:457.0px;width:123.5px;height:32px;background:#eef1f8;border-radius:8px;"></div>
<div class="t" style="left:1633.60px;top:460.72px;font-size:19px;line-height:25px;color:#0f1431;letter-spacing:0.065px;">New Blog ...</div>
<div style="left:342px;top:554.5px;width:1459px;height:1px;background:#e2e5f0;"></div>
<div class="t" style="left:385.26px;top:517.36px;font-size:16.5px;line-height:21px;color:#4d5878;">5</div>
<svg style="left:494.3px;top:515.6685px;" width="24" height="24" viewBox="0 0 24 24" fill="none"><path d="M5.5 5 H18.5 Q19.3 5 19.3 5.8 V14.6 L15 19 H5.5 Q4.7 19 4.7 18.2 V5.8 Q4.7 5 5.5 5 Z M19.3 14.7 H15.8 Q15 14.7 15 15.5 V19" stroke="#0f1431" stroke-width="1.4" fill="none" stroke-linecap="round" stroke-linejoin="miter" /></svg>
<div class="t" style="left:527.50px;top:515.39px;font-size:19px;line-height:25px;color:#0f1431;letter-spacing:0.271px;">5. Editing and Formatting</div>
<div style="left:1058.1px;top:511.7px;width:71.1px;height:32px;background:#c3eeff;border-radius:8.5px;"></div>
<div style="left:1063.7px;top:516.8px;width:8.2px;height:21.7px;background:#2e9edf;border-radius:4.1px;"></div>
<div class="t" style="left:1079.60px;top:515.39px;font-size:19px;line-height:25px;color:#0f1431;letter-spacing:-0.048px;">New</div>
<div class="t" style="left:1208.26px;top:515.39px;font-size:19px;line-height:25px;color:#0f1431;letter-spacing:0.817px;">01/03/2024</div>
<div class="t" style="left:1348.86px;top:515.39px;font-size:19px;line-height:25px;color:#d8363e;letter-spacing:0.873px;">07/03/2024</div>
<div class="t" style="left:1491.45px;top:515.39px;font-size:19px;line-height:25px;color:#0f1431;letter-spacing:0.050px;">Active</div>
<div style="left:1624px;top:511.7px;width:123.5px;height:32px;background:#eef1f8;border-radius:8px;"></div>
<div class="t" style="left:1633.60px;top:515.39px;font-size:19px;line-height:25px;color:#0f1431;letter-spacing:0.065px;">New Blog ...</div>
<div style="left:342px;top:609.17px;width:1459px;height:1px;background:#e2e5f0;"></div>
<div class="t" style="left:385.28px;top:572.03px;font-size:16.5px;line-height:21px;color:#4d5878;">6</div>
<svg style="left:494.3px;top:570.3354999999999px;" width="24" height="24" viewBox="0 0 24 24" fill="none"><path d="M5.5 5 H18.5 Q19.3 5 19.3 5.8 V14.6 L15 19 H5.5 Q4.7 19 4.7 18.2 V5.8 Q4.7 5 5.5 5 Z M19.3 14.7 H15.8 Q15 14.7 15 15.5 V19" stroke="#0f1431" stroke-width="1.4" fill="none" stroke-linecap="round" stroke-linejoin="miter" /></svg>
<div class="t" style="left:527.50px;top:570.05px;font-size:19px;line-height:25px;color:#0f1431;letter-spacing:-0.143px;">6. Final Review</div>
<div style="left:1058.1px;top:566.3px;width:71.1px;height:32px;background:#c3eeff;border-radius:8.5px;"></div>
<div style="left:1063.7px;top:571.4px;width:8.2px;height:21.7px;background:#2e9edf;border-radius:4.1px;"></div>
<div class="t" style="left:1079.60px;top:570.05px;font-size:19px;line-height:25px;color:#0f1431;letter-spacing:-0.048px;">New</div>
<div class="t" style="left:1349.22px;top:570.05px;font-size:19px;line-height:25px;color:#d8363e;letter-spacing:0.833px;">12/03/2024</div>
<div class="t" style="left:1491.45px;top:570.05px;font-size:19px;line-height:25px;color:#0f1431;letter-spacing:0.050px;">Active</div>
<div style="left:1624px;top:566.3px;width:123.5px;height:32px;background:#eef1f8;border-radius:8px;"></div>
<div class="t" style="left:1633.60px;top:570.05px;font-size:19px;line-height:25px;color:#0f1431;letter-spacing:0.065px;">New Blog ...</div>
<div style="left:342px;top:663.84px;width:1459px;height:1px;background:#e2e5f0;"></div>
<div class="t" style="left:385.30px;top:626.69px;font-size:16.5px;line-height:21px;color:#4d5878;">7</div>
<svg style="left:494.3px;top:625.0024999999999px;" width="24" height="24" viewBox="0 0 24 24" fill="none"><path d="M5.5 5 H18.5 Q19.3 5 19.3 5.8 V14.6 L15 19 H5.5 Q4.7 19 4.7 18.2 V5.8 Q4.7 5 5.5 5 Z M19.3 14.7 H15.8 Q15 14.7 15 15.5 V19" stroke="#0f1431" stroke-width="1.4" fill="none" stroke-linecap="round" stroke-linejoin="miter" /></svg>
<div class="t" style="left:527.50px;top:624.72px;font-size:19px;line-height:25px;color:#0f1431;letter-spacing:0.075px;">7. Blog/Email Creation</div>
<div style="left:1058.1px;top:621.0px;width:71.1px;height:32px;background:#c3eeff;border-radius:8.5px;"></div>
<div style="left:1063.7px;top:626.1px;width:8.2px;height:21.7px;background:#2e9edf;border-radius:4.1px;"></div>
<div class="t" style="left:1079.60px;top:624.72px;font-size:19px;line-height:25px;color:#0f1431;letter-spacing:-0.048px;">New</div>
<div class="t" style="left:1208.26px;top:624.72px;font-size:19px;line-height:25px;color:#0f1431;letter-spacing:0.817px;">08/03/2024</div>
<div class="t" style="left:1348.86px;top:624.72px;font-size:19px;line-height:25px;color:#d8363e;letter-spacing:0.873px;">08/03/2024</div>
<div class="t" style="left:1491.45px;top:624.72px;font-size:19px;line-height:25px;color:#0f1431;letter-spacing:0.050px;">Active</div>
<div style="left:1624px;top:621.0px;width:123.5px;height:32px;background:#eef1f8;border-radius:8px;"></div>
<div class="t" style="left:1633.60px;top:624.72px;font-size:19px;line-height:25px;color:#0f1431;letter-spacing:0.065px;">New Blog ...</div>
<div style="left:342px;top:718.5px;width:1459px;height:1px;background:#e2e5f0;"></div>
<div class="t" style="left:385.41px;top:681.36px;font-size:16.5px;line-height:21px;color:#4d5878;">8</div>
<svg style="left:494.3px;top:679.6695px;" width="24" height="24" viewBox="0 0 24 24" fill="none"><path d="M5.5 5 H18.5 Q19.3 5 19.3 5.8 V14.6 L15 19 H5.5 Q4.7 19 4.7 18.2 V5.8 Q4.7 5 5.5 5 Z M19.3 14.7 H15.8 Q15 14.7 15 15.5 V19" stroke="#0f1431" stroke-width="1.4" fill="none" stroke-linecap="round" stroke-linejoin="miter" /></svg>
<div class="t" style="left:527.50px;top:679.39px;font-size:19px;line-height:25px;color:#0f1431;letter-spacing:0.266px;">8. Launch</div>
<div style="left:1058.1px;top:675.7px;width:71.1px;height:32px;background:#c3eeff;border-radius:8.5px;"></div>
<div style="left:1063.7px;top:680.8px;width:8.2px;height:21.7px;background:#2e9edf;border-radius:4.1px;"></div>
<div class="t" style="left:1079.60px;top:679.39px;font-size:19px;line-height:25px;color:#0f1431;letter-spacing:-0.048px;">New</div>
<div class="t" style="left:1209.02px;top:679.39px;font-size:19px;line-height:25px;color:#0f1431;letter-spacing:0.733px;">13/03/2024</div>
<div class="t" style="left:1348.60px;top:679.39px;font-size:19px;line-height:25px;color:#d8363e;letter-spacing:0.902px;">22/03/2024</div>
<div class="t" style="left:1491.45px;top:679.39px;font-size:19px;line-height:25px;color:#0f1431;letter-spacing:0.050px;">Active</div>
<div style="left:1624px;top:675.7px;width:123.5px;height:32px;background:#eef1f8;border-radius:8px;"></div>
<div class="t" style="left:1633.60px;top:679.39px;font-size:19px;line-height:25px;color:#0f1431;letter-spacing:0.065px;">New Blog ...</div>
<div style="left:342px;top:773.17px;width:1459px;height:1px;background:#e2e5f0;"></div>
<div class="t" style="left:385.30px;top:736.03px;font-size:16.5px;line-height:21px;color:#4d5878;">9</div>
<svg style="left:494.3px;top:734.3364999999999px;" width="24" height="24" viewBox="0 0 24 24" fill="none"><path d="M5.5 5 H18.5 Q19.3 5 19.3 5.8 V14.6 L15 19 H5.5 Q4.7 19 4.7 18.2 V5.8 Q4.7 5 5.5 5 Z M19.3 14.7 H15.8 Q15 14.7 15 15.5 V19" stroke="#0f1431" stroke-width="1.4" fill="none" stroke-linecap="round" stroke-linejoin="miter" /></svg>
<div class="t" style="left:527.50px;top:734.05px;font-size:19px;line-height:25px;color:#0f1431;letter-spacing:0.106px;">2. Schedule Blog Post</div>
<div style="left:853.1px;top:730.4px;width:31.8px;height:31.8px;border-radius:8.5px;overflow:hidden;"><svg style="display:block;overflow:hidden" width="31.8" height="31.8" viewBox="0 0 32 32"><defs><filter id="avb5" x="-10%" y="-10%" width="120%" height="120%"><feGaussianBlur stdDeviation="0.55"/></filter></defs><rect width="32" height="32" fill="#dfe5ea"/><g filter="url(#avb5)"><rect x="-2" y="-2" width="36" height="36" fill="#dde4ea"/><rect x="21" y="-2" width="14" height="36" fill="#eef1f2"/><rect x="22.4" y="-2" width="3.4" height="13" fill="#6a7273"/><rect x="25.8" y="-2" width="2" height="26" fill="#b8c0c2"/><rect x="24" y="14.6" width="10" height="1.2" fill="#9aa4a6"/><path d="M23 33 L23 26 Q23.6 21.6 25.4 20.4 Q27.6 19.6 29.6 21.6 Q31 24 30 27 L28.6 33 Z" fill="#6aa861"/><path d="M22.6 23 l2.4 2.4 M26.4 21 l1.4 3.4 M29.6 24 l-1.6 3" stroke="#e6f2e2" stroke-width="1.1"/><path d="M-1 33 L-1 23.6 Q2 20.6 7 20.8 L12 24 L20 29 L22 33 Z" fill="#a8bccb"/><path d="M6 20.6 L9.4 19.6 L15 27 L19.6 28 L21.6 33 L13 33 Z" fill="#bccddb"/><path d="M5.6 13.6 Q4.4 7 9 3.6 Q13 0.6 18.6 1.6 Q23.6 2.6 25.2 7.6 Q26.2 11.6 24.4 15.6 L21 10 L10 9.6 L8.2 15.6 Z" fill="#3a2a24"/><path d="M8.4 12.4 Q9.6 7 14.6 7 Q20.4 7 21.4 12.6 Q22 18 19.6 22.6 Q17.4 26.4 14 26 Q10 25 8.6 19 Q8 15.6 8.4 12.4 Z" fill="#d9a687"/><path d="M8.2 15.4 Q9 22 11.6 25 Q14.4 27.6 17.6 25.8 Q20.4 23.6 21.4 17.6 Q19.6 20.6 17.8 20.2 Q14.6 18.6 11.8 19.8 Q9.6 19.6 8.2 15.4 Z" fill="#4a3329"/><path d="M12 20.8 Q14.8 23 18 20.6 Q15 21.4 12 20.8 Z" fill="#fff" stroke="#fff" stroke-width="0.6"/><path d="M10.4 12.6 h3.4 M16.4 12.6 h3.4" stroke="#3a2a24" stroke-width="0.9"/></g></svg></div>
<div class="t" style="left:895.10px;top:734.05px;font-size:19px;line-height:25px;color:#0f1431;letter-spacing:0.330px;">David Martin</div>
<div style="left:1058.1px;top:730.3px;width:129.3px;height:32px;background:#cef8f9;border-radius:8.5px;"></div>
<div style="left:1063.7px;top:735.4px;width:8.2px;height:21.7px;background:#3cc6c6;border-radius:4.1px;"></div>
<div class="t" style="left:1079.58px;top:734.05px;font-size:19px;line-height:25px;color:#0f1431;letter-spacing:-0.034px;">In Progress</div>
<div class="t" style="left:1209.02px;top:734.05px;font-size:19px;line-height:25px;color:#0f1431;letter-spacing:0.733px;">12/02/2024</div>
<div class="t" style="left:1349.22px;top:734.05px;font-size:19px;line-height:25px;color:#d8363e;letter-spacing:0.833px;">12/02/2024</div>
<div class="t" style="left:1491.45px;top:734.05px;font-size:19px;line-height:25px;color:#0f1431;letter-spacing:0.050px;">Active</div>
<div style="left:1624px;top:730.3px;width:123.5px;height:32px;background:#eef1f8;border-radius:8px;"></div>
<div class="t" style="left:1633.60px;top:734.05px;font-size:19px;line-height:25px;color:#0f1431;letter-spacing:0.065px;">New Blog ...</div>
<div style="left:342px;top:827.84px;width:1459px;height:1px;background:#e2e5f0;"></div>
<div class="t" style="left:380.51px;top:790.69px;font-size:16.5px;line-height:21px;color:#4d5878;">10</div>
<svg style="left:494.3px;top:789.0035px;" width="24" height="24" viewBox="0 0 24 24" fill="none"><path d="M5.5 5 H18.5 Q19.3 5 19.3 5.8 V14.6 L15 19 H5.5 Q4.7 19 4.7 18.2 V5.8 Q4.7 5 5.5 5 Z M19.3 14.7 H15.8 Q15 14.7 15 15.5 V19" stroke="#0f1431" stroke-width="1.4" fill="none" stroke-linecap="round" stroke-linejoin="miter" /></svg>
<div class="t" style="left:528.14px;top:788.72px;font-size:19px;line-height:25px;color:#0f1431;letter-spacing:0.073px;">4. Request Graphics</div>
<div style="left:853.1px;top:785.1px;width:31.8px;height:31.8px;border-radius:8.5px;overflow:hidden;"><svg style="display:block;overflow:hidden" width="31.8" height="31.8" viewBox="0 0 32 32"><defs><filter id="avb6" x="-10%" y="-10%" width="120%" height="120%"><feGaussianBlur stdDeviation="0.55"/></filter></defs><rect width="32" height="32" fill="#dfe5ea"/><g filter="url(#avb6)"><rect x="-2" y="-2" width="36" height="36" fill="#dde4ea"/><rect x="21" y="-2" width="14" height="36" fill="#eef1f2"/><rect x="22.4" y="-2" width="3.4" height="13" fill="#6a7273"/><rect x="25.8" y="-2" width="2" height="26" fill="#b8c0c2"/><rect x="24" y="14.6" width="10" height="1.2" fill="#9aa4a6"/><path d="M23 33 L23 26 Q23.6 21.6 25.4 20.4 Q27.6 19.6 29.6 21.6 Q31 24 30 27 L28.6 33 Z" fill="#6aa861"/><path d="M22.6 23 l2.4 2.4 M26.4 21 l1.4 3.4 M29.6 24 l-1.6 3" stroke="#e6f2e2" stroke-width="1.1"/><path d="M-1 33 L-1 23.6 Q2 20.6 7 20.8 L12 24 L20 29 L22 33 Z" fill="#a8bccb"/><path d="M6 20.6 L9.4 19.6 L15 27 L19.6 28 L21.6 33 L13 33 Z" fill="#bccddb"/><path d="M5.6 13.6 Q4.4 7 9 3.6 Q13 0.6 18.6 1.6 Q23.6 2.6 25.2 7.6 Q26.2 11.6 24.4 15.6 L21 10 L10 9.6 L8.2 15.6 Z" fill="#3a2a24"/><path d="M8.4 12.4 Q9.6 7 14.6 7 Q20.4 7 21.4 12.6 Q22 18 19.6 22.6 Q17.4 26.4 14 26 Q10 25 8.6 19 Q8 15.6 8.4 12.4 Z" fill="#d9a687"/><path d="M8.2 15.4 Q9 22 11.6 25 Q14.4 27.6 17.6 25.8 Q20.4 23.6 21.4 17.6 Q19.6 20.6 17.8 20.2 Q14.6 18.6 11.8 19.8 Q9.6 19.6 8.2 15.4 Z" fill="#4a3329"/><path d="M12 20.8 Q14.8 23 18 20.6 Q15 21.4 12 20.8 Z" fill="#fff" stroke="#fff" stroke-width="0.6"/><path d="M10.4 12.6 h3.4 M16.4 12.6 h3.4" stroke="#3a2a24" stroke-width="0.9"/></g></svg></div>
<div class="t" style="left:895.10px;top:788.72px;font-size:19px;line-height:25px;color:#0f1431;letter-spacing:0.330px;">David Martin</div>
<div style="left:1058.1px;top:785.0px;width:129.3px;height:32px;background:#cef8f9;border-radius:8.5px;"></div>
<div style="left:1063.7px;top:790.1px;width:8.2px;height:21.7px;background:#3cc6c6;border-radius:4.1px;"></div>
<div class="t" style="left:1079.58px;top:788.72px;font-size:19px;line-height:25px;color:#0f1431;letter-spacing:-0.034px;">In Progress</div>
<div class="t" style="left:1208.00px;top:788.72px;font-size:19px;line-height:25px;color:#0f1431;letter-spacing:0.846px;">26/02/2024</div>
<div class="t" style="left:1348.60px;top:788.72px;font-size:19px;line-height:25px;color:#d8363e;letter-spacing:0.902px;">26/02/2024</div>
<div class="t" style="left:1491.45px;top:788.72px;font-size:19px;line-height:25px;color:#0f1431;letter-spacing:0.050px;">Active</div>
<div style="left:1624px;top:785.0px;width:123.5px;height:32px;background:#eef1f8;border-radius:8px;"></div>
<div class="t" style="left:1633.60px;top:788.72px;font-size:19px;line-height:25px;color:#0f1431;letter-spacing:0.065px;">New Blog ...</div>
<div style="left:342px;top:882.5px;width:1459px;height:1px;background:#e2e5f0;"></div>
<div class="t" style="left:381.21px;top:845.36px;font-size:16.5px;line-height:21px;color:#4d5878;">11</div>
<svg style="left:432px;top:845.6705px;" width="20" height="20" viewBox="0 0 20 20" fill="none"><path d="M5.1 7.55 L10 12.45 L14.9 7.55" stroke="#4a5372" stroke-width="1.3" fill="none" stroke-linecap="round" stroke-linejoin="round" /></svg>
<svg style="left:461.84000000000003px;top:842.5105px;" width="23.52" height="23.52" viewBox="0 0 24 24" fill="none"><path d="M8.1 4.8 H6.6 Q5.2 4.8 5.2 6.2 V19.5 Q5.2 20.9 6.6 20.9 H17.4 Q18.8 20.9 18.8 19.5 V6.2 Q18.8 4.8 17.4 4.8 H15.9" stroke="#0f1431" stroke-width="1.4285714285714286" fill="none" stroke-linecap="round" stroke-linejoin="round" /><path d="M8.1 4.1 Q8.1 3.1 9.1 3.1 H14.9 Q15.9 3.1 15.9 4.1 V5 Q15.9 6 14.9 6 H9.1 Q8.1 6 8.1 5 Z" stroke="#0f1431" stroke-width="1.4285714285714286" fill="none" stroke-linecap="round" stroke-linejoin="round" /><path d="M8.3 11.1 H15.7 M8.3 13.8 H15.7" stroke="#0f1431" stroke-width="1.4285714285714286" fill="none" stroke-linecap="butt" stroke-linejoin="round" /></svg>
<div class="t" style="left:495.92px;top:843.88px;font-size:18.5px;line-height:24px;color:#0f1431;font-weight:700;letter-spacing:0.090px;">Asset Request</div>
<div style="left:853.1px;top:839.8px;width:31.8px;height:31.8px;border-radius:8.5px;overflow:hidden;"><svg style="display:block;overflow:hidden" width="31.8" height="31.8" viewBox="0 0 32 32"><defs><filter id="avb7" x="-10%" y="-10%" width="120%" height="120%"><feGaussianBlur stdDeviation="0.55"/></filter></defs><rect width="32" height="32" fill="#e5e6e4"/><g filter="url(#avb7)"><rect x="-2" y="-2" width="36" height="36" fill="#e6e7e6"/><rect x="-2" y="0.5" width="36" height="2.2" fill="#c9c9c4"/><rect x="3" y="5" width="9" height="2.2" fill="#d2cbb9"/><rect x="23" y="6" width="10" height="2" fill="#d4cdbd"/><rect x="23.5" y="0" width="2.5" height="32" fill="#f4f5f5"/><rect x="0" y="11" width="8" height="1.2" fill="#d6d6d2"/><rect x="0" y="17" width="8" height="1" fill="#d9d9d6"/><rect x="4" y="22.5" width="3.5" height="2.5" fill="#8d8a86"/><path d="M8.2 15 Q7.4 8 11 5 Q14 2.4 18.5 3 Q23.5 3.6 25 9 Q26.2 13 25.2 17 Q25.6 21 23.6 24 L20 25 L12 25 Q8.4 22 8.2 15 Z" fill="#3b2d2a"/><path d="M12.6 12.6 Q12.8 7.6 17.6 7.6 Q22.2 7.8 22.2 13 Q22.2 18 20 20.6 Q18 22.4 16 21.2 Q12.8 18.6 12.6 12.6 Z" fill="#e2b7a2"/><path d="M14.6 21 L20.6 21 L21.4 26 L22 32 L13.4 32 L14.2 25.6 Z" fill="#e6c1ae"/><path d="M13 11 H22.4 V11.9 H13 Z" fill="#3a2f2c"/><rect x="13.2" y="11" width="3.9" height="3" rx="0.8" fill="none" stroke="#40342f" stroke-width="0.8"/><rect x="18.3" y="11" width="3.9" height="3" rx="0.8" fill="none" stroke="#40342f" stroke-width="0.8"/><path d="M15.2 16.6 Q17.4 18.6 20 16.4 Q17.6 17.4 15.2 16.6 Z" fill="#fff" stroke="#fff" stroke-width="0.7"/><path d="M0.5 33 Q1.5 26.6 6.5 25.6 L12.2 23.2 L16.4 31.5 L17 33 Z" fill="#14a58f"/><path d="M33 33 L31.5 27.6 Q30.5 25.6 27 24.8 L22 22.8 L20.6 31.5 L20 33 Z" fill="#16ad96"/><path d="M11 23.4 L12.6 22.6 L17 32 L15 32 Z" fill="#0f8f7c"/><path d="M22.6 22.6 L21 32 L22.6 32 L24 23.4 Z" fill="#0f8f7c"/></g></svg></div>
<div class="t" style="left:895.10px;top:843.39px;font-size:19px;line-height:25px;color:#0f1431;letter-spacing:0.098px;">Lisa Simpson</div>
<div style="left:1058.1px;top:839.7px;width:129.3px;height:32px;background:#cef8f9;border-radius:8.5px;"></div>
<div style="left:1063.7px;top:844.8px;width:8.2px;height:21.7px;background:#3cc6c6;border-radius:4.1px;"></div>
<div class="t" style="left:1079.58px;top:843.39px;font-size:19px;line-height:25px;color:#0f1431;letter-spacing:-0.034px;">In Progress</div>
<div class="t" style="left:1209.02px;top:843.39px;font-size:19px;line-height:25px;color:#0f1431;letter-spacing:0.733px;">16/01/2024</div>
<div class="t" style="left:1348.86px;top:843.39px;font-size:19px;line-height:25px;color:#d8363e;letter-spacing:0.873px;">08/02/2024</div>
<div class="t" style="left:1491.45px;top:843.39px;font-size:19px;line-height:25px;color:#0f1431;letter-spacing:0.050px;">Active</div>
<div style="left:1624px;top:839.7px;width:123.5px;height:32px;background:#eef1f8;border-radius:8px;"></div>
<div class="t" style="left:1633.72px;top:843.39px;font-size:19px;line-height:25px;color:#0f1431;letter-spacing:-0.043px;">1. Creativ...</div>
<div style="left:342px;top:937.17px;width:1459px;height:1px;background:#e2e5f0;"></div>
<div class="t" style="left:380.59px;top:900.03px;font-size:16.5px;line-height:21px;color:#4d5878;">12</div>
<svg style="left:494.3px;top:898.3374999999999px;" width="24" height="24" viewBox="0 0 24 24" fill="none"><path d="M5.5 5 H18.5 Q19.3 5 19.3 5.8 V14.6 L15 19 H5.5 Q4.7 19 4.7 18.2 V5.8 Q4.7 5 5.5 5 Z M19.3 14.7 H15.8 Q15 14.7 15 15.5 V19" stroke="#0f1431" stroke-width="1.4" fill="none" stroke-linecap="round" stroke-linejoin="miter" /></svg>
<div class="t" style="left:528.14px;top:898.06px;font-size:19px;line-height:25px;color:#0f1431;letter-spacing:-0.132px;">4. Review</div>
<div style="left:1058.1px;top:894.3px;width:71.1px;height:32px;background:#c3eeff;border-radius:8.5px;"></div>
<div style="left:1063.7px;top:899.4px;width:8.2px;height:21.7px;background:#2e9edf;border-radius:4.1px;"></div>
<div class="t" style="left:1079.60px;top:898.06px;font-size:19px;line-height:25px;color:#0f1431;letter-spacing:-0.048px;">New</div>
<div class="t" style="left:1208.00px;top:898.06px;font-size:19px;line-height:25px;color:#0f1431;letter-spacing:0.846px;">31/01/2024</div>
<div class="t" style="left:1348.86px;top:898.06px;font-size:19px;line-height:25px;color:#d8363e;letter-spacing:0.873px;">05/02/2024</div>
<div class="t" style="left:1491.45px;top:898.06px;font-size:19px;line-height:25px;color:#0f1431;letter-spacing:0.050px;">Active</div>
<div style="left:1624px;top:894.3px;width:123.5px;height:32px;background:#eef1f8;border-radius:8px;"></div>
<div class="t" style="left:1634.95px;top:898.06px;font-size:19px;line-height:25px;color:#0f1431;letter-spacing:-0.240px;">Asset Req...</div>
<div style="left:342px;top:991.84px;width:1459px;height:1px;background:#e2e5f0;"></div>
<div class="t" style="left:380.55px;top:954.69px;font-size:16.5px;line-height:21px;color:#4d5878;">13</div>
<svg style="left:494.3px;top:953.0045px;" width="24" height="24" viewBox="0 0 24 24" fill="none"><path d="M5.5 5 H18.5 Q19.3 5 19.3 5.8 V14.6 L15 19 H5.5 Q4.7 19 4.7 18.2 V5.8 Q4.7 5 5.5 5 Z M19.3 14.7 H15.8 Q15 14.7 15 15.5 V19" stroke="#0f1431" stroke-width="1.4" fill="none" stroke-linecap="round" stroke-linejoin="miter" /></svg>
<div class="t" style="left:527.50px;top:952.72px;font-size:19px;line-height:25px;color:#0f1431;letter-spacing:0.422px;">5. Approval</div>
<div style="left:1058.1px;top:949.0px;width:71.1px;height:32px;background:#c3eeff;border-radius:8.5px;"></div>
<div style="left:1063.7px;top:954.1px;width:8.2px;height:21.7px;background:#2e9edf;border-radius:4.1px;"></div>
<div class="t" style="left:1079.60px;top:952.72px;font-size:19px;line-height:25px;color:#0f1431;letter-spacing:-0.048px;">New</div>
<div class="t" style="left:1208.26px;top:952.72px;font-size:19px;line-height:25px;color:#0f1431;letter-spacing:0.817px;">06/02/2024</div>
<div class="t" style="left:1348.86px;top:952.72px;font-size:19px;line-height:25px;color:#d8363e;letter-spacing:0.873px;">06/02/2024</div>
<div class="t" style="left:1491.45px;top:952.72px;font-size:19px;line-height:25px;color:#0f1431;letter-spacing:0.050px;">Active</div>
<div style="left:1624px;top:949.0px;width:123.5px;height:32px;background:#eef1f8;border-radius:8px;"></div>
<div class="t" style="left:1634.95px;top:952.72px;font-size:19px;line-height:25px;color:#0f1431;letter-spacing:-0.240px;">Asset Req...</div>
<div style="left:343px;top:984px;width:1458px;height:56px;background:#fff;box-shadow:0 -2px 6px rgba(30,40,70,0.07);background:linear-gradient(#fff 0%,#fff 50%,#f4f4f4 100%);border-radius:0 0 6px 0;"></div>
<svg style="left:431.5px;top:1002.5px;" width="20" height="20" viewBox="0 0 20 20" fill="none"><path d="M3 10 H17 M10 3 V17" stroke="#0f1431" stroke-width="1.4" fill="none" stroke-linecap="round" stroke-linejoin="round" /></svg>
<div class="t" style="left:462.28px;top:1000.22px;font-size:19px;line-height:25px;color:#0f1431;letter-spacing:1.022px;">Item</div>
<div class="t" style="left:507.5px;top:998px;font-family:'DejaVu Sans','Liberation Sans',sans-serif;font-size:30px;line-height:39px;color:#a0a8bf;">⌃</div>
<div class="t" style="left:525px;top:1001px;font-family:'DejaVu Sans','Liberation Sans',sans-serif;font-size:18.5px;line-height:24px;color:#8790ab;transform:scaleX(1.7);transform-origin:0 0;">⇧</div>
<div class="t" style="left:545.00px;top:1000.22px;font-size:19px;line-height:25px;color:#8790ab;">N</div>
<div style="left:1330px;top:162px;width:340px;height:356px;background:#fff;border-radius:14px;box-shadow:0 8px 24px rgba(50,60,115,0.17),0 0 3px rgba(50,60,115,0.10);"></div>
<div class="t" style="left:1362.29px;top:182.29px;font-size:16.3px;line-height:21px;color:#434e70;font-weight:700;letter-spacing:0.086px;">Show in table</div>
<svg style="left:1363px;top:225px;" width="24" height="24" viewBox="0 0 24 24" fill="none"><path d="M4.6 12.6 L9.7 17.6 L19.8 6.4" stroke="#0f1431" stroke-width="2.5" fill="none" stroke-linecap="butt" stroke-linejoin="miter" /></svg>
<div class="t" style="left:1394.50px;top:224.52px;font-size:19px;line-height:25px;color:#0f1431;letter-spacing:0.335px;">Projects and tasks structure</div>
<div class="t" style="left:1394.93px;top:270.22px;font-size:19px;line-height:25px;color:#0f1431;letter-spacing:0.252px;">Single list of tasks</div>
<div style="left:1362px;top:315px;width:276px;height:1px;background:#e3e6ee;"></div>
<div class="t" style="left:1363.00px;top:336.72px;font-size:19px;line-height:25px;color:#0f1431;letter-spacing:0.182px;">Collapse all</div>
<div class="t" style="left:1362.50px;top:382.12px;font-size:19px;line-height:25px;color:#0f1431;letter-spacing:0.139px;">Expand next level</div>
<div class="t" style="left:1362.50px;top:427.52px;font-size:19px;line-height:25px;color:#0f1431;letter-spacing:0.260px;">Expand to show projects</div>
<div class="t" style="left:1362.50px;top:472.92px;font-size:19px;line-height:25px;color:#0f1431;letter-spacing:0.166px;">Expand all</div>
<div style="left:373px;top:116.9px;width:124px;height:45.1px;border:6px solid #07cd61;border-radius:11.5px;box-sizing:border-box;box-shadow:0 3px 6px rgba(20,30,60,0.07);"></div>
<div style="left:324.6px;top:109.9px;width:56px;height:56px;border-radius:50%;background:rgba(10,200,92,0.2);"></div>
<div style="left:333.5px;top:118.80000000000001px;width:38.2px;height:38.2px;border-radius:50%;background:#07cd61;"></div>
<div class="t" style="left:346.09px;top:123.65px;font-size:22px;line-height:29px;color:#fff;font-weight:700;">1</div>
<div style="left:1317px;top:115.8px;width:135px;height:44.4px;border:6px solid #07cd61;border-radius:11.5px;box-sizing:border-box;box-shadow:0 3px 6px rgba(20,30,60,0.07);"></div>
<div style="left:1281.1px;top:83.8px;width:48.4px;height:48.4px;border-radius:50%;background:rgba(10,200,92,0.2);"></div>
<div style="left:1288.6px;top:91.3px;width:33.4px;height:33.4px;border-radius:50%;background:#07cd61;"></div>
<div class="t" style="left:1300.20px;top:96.21px;font-size:18.5px;line-height:24px;color:#fff;font-weight:700;">2</div>
<div style="left:1347px;top:214px;width:307.8px;height:42.8px;border:6px solid #07cd61;border-radius:11.5px;box-sizing:border-box;box-shadow:0 3px 6px rgba(20,30,60,0.07);"></div>
<div style="left:1305.9px;top:209.1px;width:49.2px;height:49.2px;border-radius:50%;background:rgba(10,200,92,0.2);"></div>
<div style="left:1313.7px;top:216.89999999999998px;width:33.6px;height:33.6px;border-radius:50%;background:#07cd61;"></div>
<div class="t" style="left:1325.30px;top:221.91px;font-size:18.5px;line-height:24px;color:#fff;font-weight:700;">4</div>
<div style="left:1352px;top:261.3px;width:264.8px;height:45.3px;border:6px solid #07cd61;border-radius:11.5px;box-sizing:border-box;box-shadow:0 3px 6px rgba(20,30,60,0.07);"></div>
<div style="left:1308.8px;top:262.7px;width:48px;height:48px;border-radius:50%;background:rgba(10,200,92,0.2);"></div>
<div style="left:1316.3999999999999px;top:270.3px;width:32.8px;height:32.8px;border-radius:50%;background:#07cd61;"></div>
<div class="t" style="left:1327.71px;top:274.91px;font-size:18.5px;line-height:24px;color:#fff;font-weight:700;">3</div>
</div></body></html>
